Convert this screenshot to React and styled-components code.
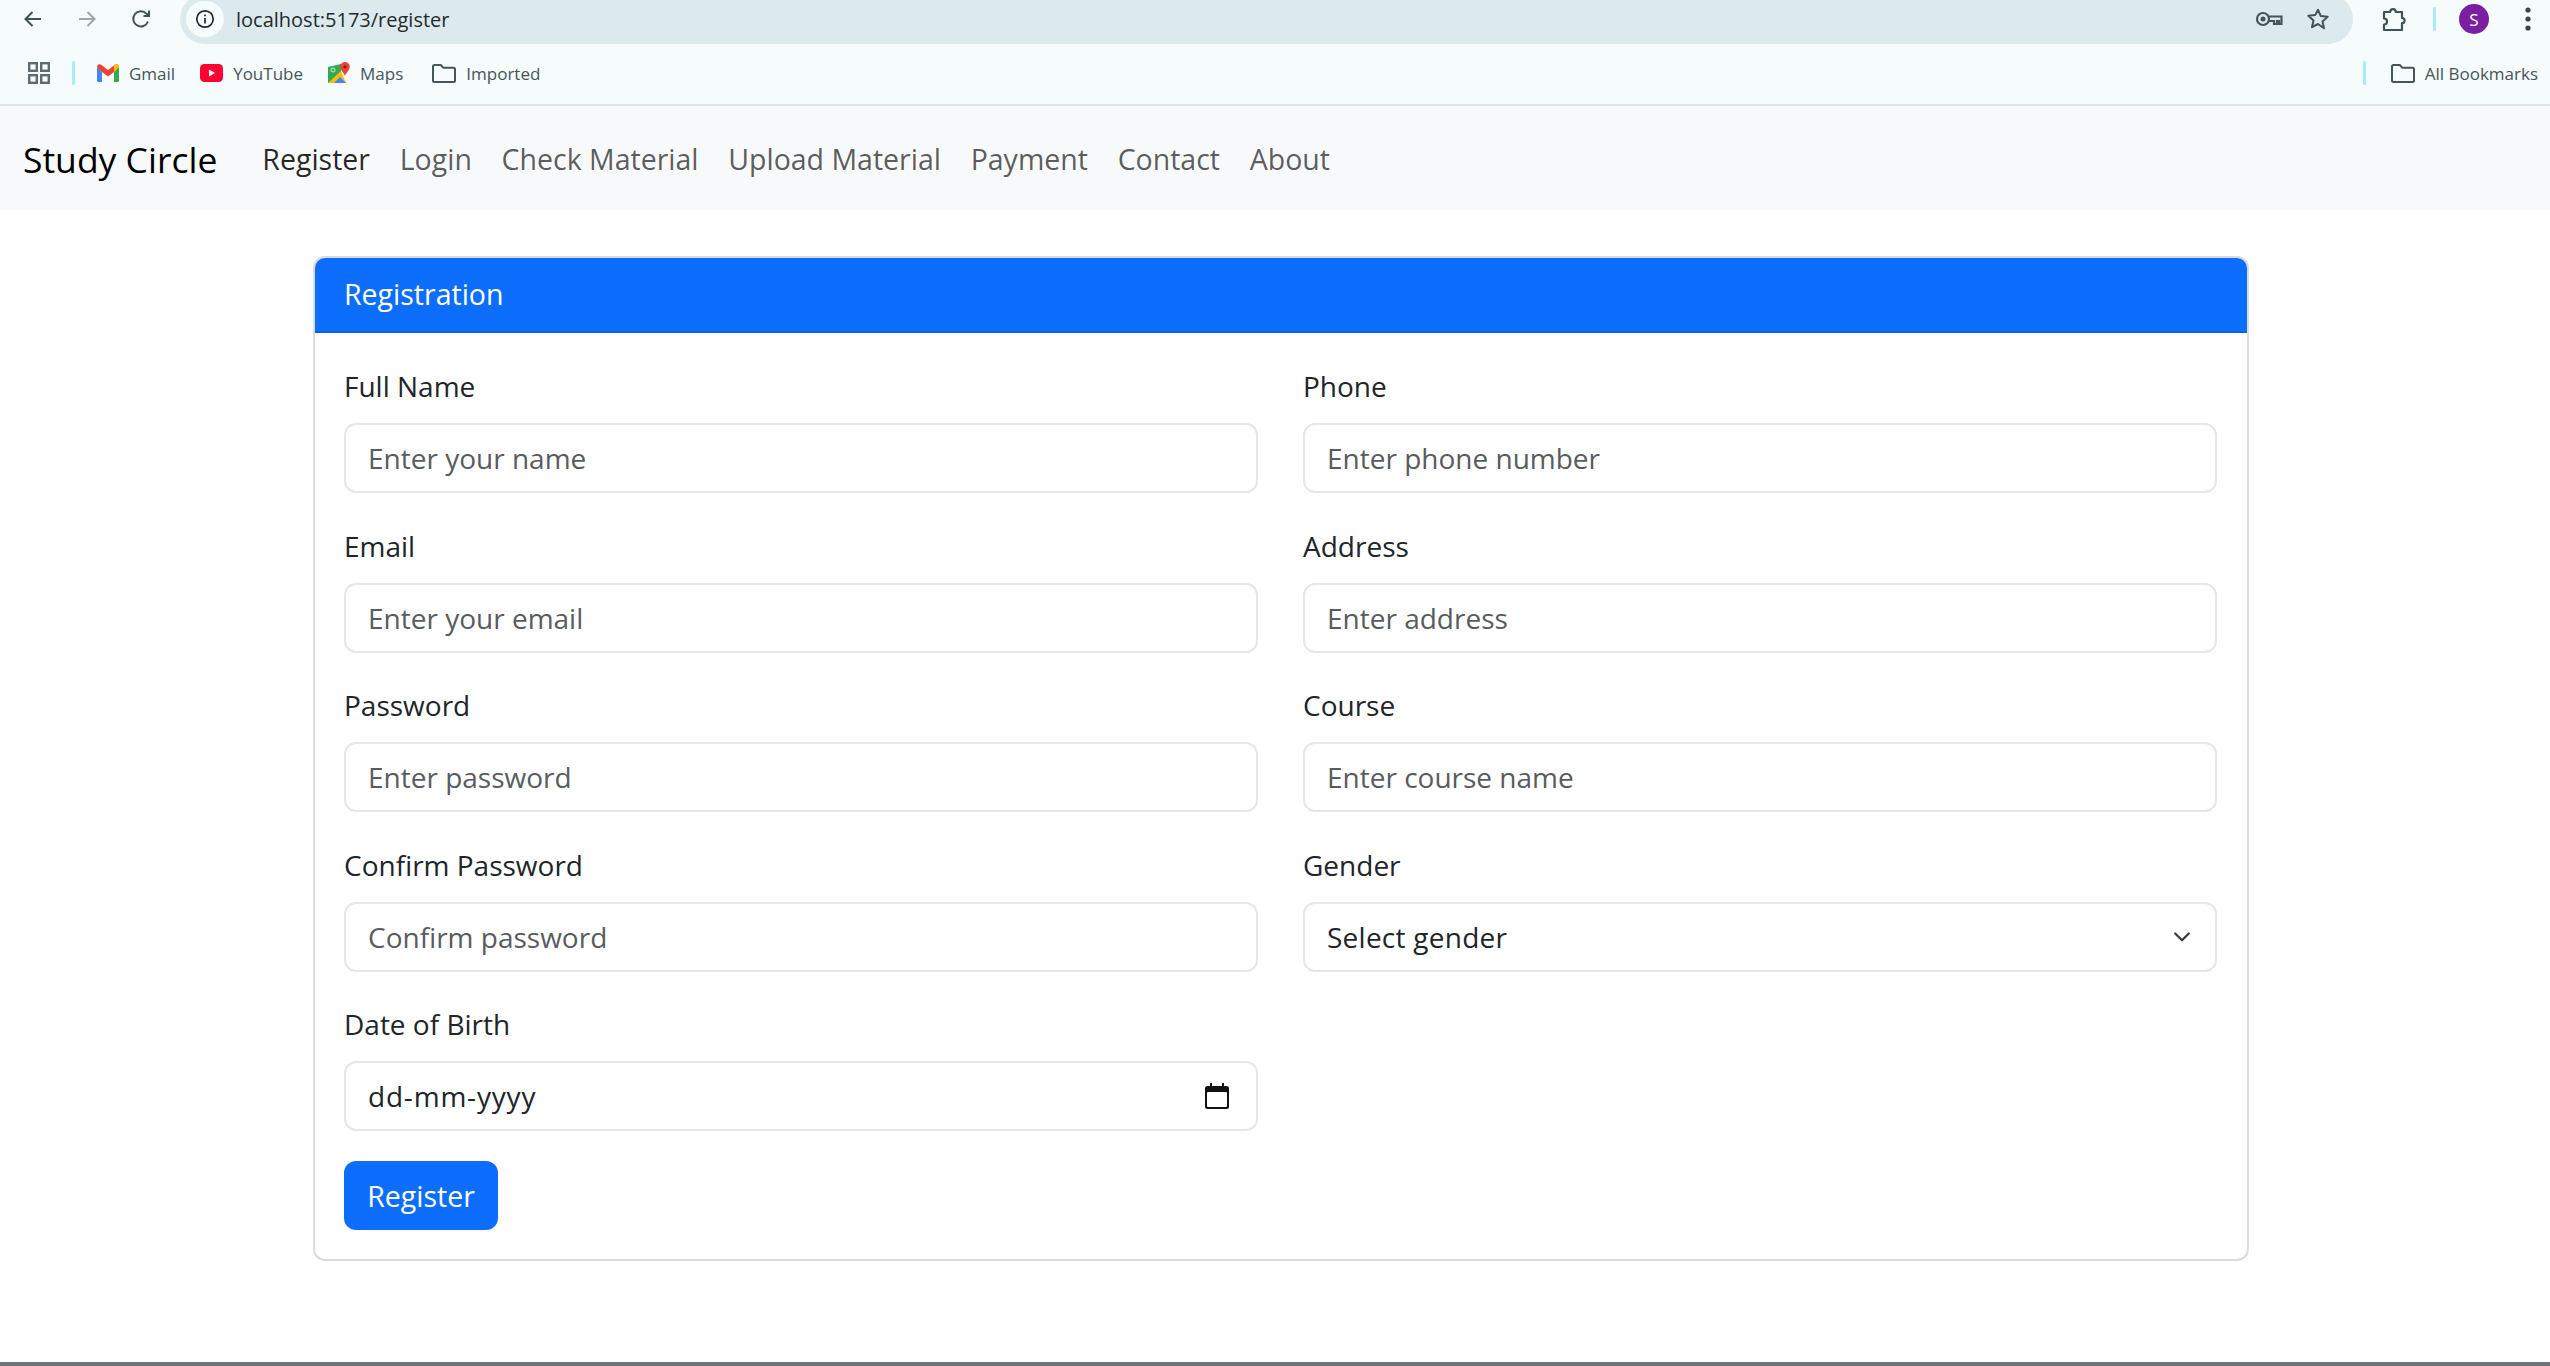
import styled, { createGlobalStyle } from "styled-components";

const GlobalStyle = createGlobalStyle`
html, body {
    margin: 0;
    padding: 0;
    height: 100%;
    overflow: hidden;
    background: #fff;
}
* {
    box-sizing: border-box;
}
body {
    font-family: "Open Sans", "Noto Sans", sans-serif;
    color: #212529;
}
`

const leftFields = [
    { label: "Full Name", placeholder: "Enter your name" },
    { label: "Email", placeholder: "Enter your email" },
    { label: "Password", placeholder: "Enter password" },
    { label: "Confirm Password", placeholder: "Confirm password" },
];

const rightFields = [
    { label: "Phone", placeholder: "Enter phone number" },
    { label: "Address", placeholder: "Enter address" },
    { label: "Course", placeholder: "Enter course name" },
];

const navLinks = ["Register", "Login", "Check Material", "Upload Material", "Payment", "Contact", "About"];

function BackIcon({ color }) {
    return (
        <svg width="24" height="24" viewBox="0 0 24 24" fill="none" stroke={color} strokeWidth="2">
            <path d="M20 12H5M11.5 5L4.5 12l7 7" />
        </svg>
    )
}

function ForwardIcon({ color }) {
    return (
        <svg width="24" height="24" viewBox="0 0 24 24" fill="none" stroke={color} strokeWidth="2">
            <path d="M4 12h15M12.5 5l7 7-7 7" />
        </svg>
    )
}

function ReloadIcon() {
    return (
        <svg width="24" height="24" viewBox="0 0 24 24" fill="none" stroke="#3f5257" strokeWidth="2">
            <path d="M19 14.5A7.6 7.6 0 1 1 17.4 6.6L20 9" />
            <path d="M20 3.5V9h-5.5" />
        </svg>
    )
}

function InfoIcon() {
    return (
        <svg width="20" height="20" viewBox="0 0 20 20" fill="none" stroke="#1f2a2e" strokeWidth="1.7">
            <circle cx="10" cy="10" r="8.2" />
            <path d="M10 9v5.5M10 5.4v1.8" />
        </svg>
    )
}

function KeyIcon() {
    return (
        <svg width="28" height="16" viewBox="0 0 28 16" fill="none" stroke="#465558" strokeWidth="2.2">
            <circle cx="8" cy="8" r="6" />
            <circle cx="8" cy="8" r="1.4" fill="#465558" />
            <path d="M14 5.5h12.5v7.5h-2.5v-3h-2v3h-3v-3h-5" />
        </svg>
    )
}

function StarIcon() {
    return (
        <svg width="24" height="24" viewBox="0 0 24 24" fill="none" stroke="#3f5257" strokeWidth="2" strokeLinejoin="round">
            <path d="M12 2.8l2.8 6.3 6.9.7-5.2 4.6 1.5 6.8L12 17l-6 3.2 1.5-6.8-5.2-4.6 6.9-.7z" />
        </svg>
    )
}

function PuzzleIcon() {
    return (
        <svg width="26" height="26" viewBox="0 0 26 26" fill="none" stroke="#3f5257" strokeWidth="2.2" strokeLinejoin="round">
            <path d="M3 6h6.2a2.8 2.8 0 0 1 5.6 0H21v6a2.6 2.6 0 0 1 0 5.2V24H3v-5.5a3 3 0 0 0 0-6z" />
        </svg>
    )
}

function MenuDots() {
    return (
        <svg width="6" height="24" viewBox="0 0 6 24" fill="#37474c">
            <circle cx="3" cy="3" r="2.6" />
            <circle cx="3" cy="12" r="2.6" />
            <circle cx="3" cy="21" r="2.6" />
        </svg>
    )
}

function AppsIcon() {
    return (
        <svg width="22" height="22" viewBox="0 0 22 22" fill="none" stroke="#5f6b6e" strokeWidth="2.4">
            <rect x="1.2" y="1.2" width="7.6" height="7.6" />
            <rect x="13.2" y="1.2" width="7.6" height="7.6" />
            <rect x="1.2" y="13.2" width="7.6" height="7.6" />
            <rect x="13.2" y="13.2" width="7.6" height="7.6" />
        </svg>
    )
}

function GmailIcon() {
    return (
        <svg width="22" height="18" viewBox="0 0 22 18">
            <path d="M0 3v13.5A1.5 1.5 0 0 0 1.5 18H5V8z" fill="#4285f4" />
            <path d="M22 3v13.5a1.5 1.5 0 0 1-1.5 1.5H17V8z" fill="#34a853" />
            <path d="M0 3.2C0 .8 2.6-.6 4.5.9L11 6l6.500-5.100C19.400-.6 22 .8 22 3.200L17 8l-6 4.500L5 8z" fill="#ea4335" />
            <path d="M17 8V.6l.5.3C19.400-.6 22 .8 22 3.200z" fill="#fbbc04" />
        </svg>
    )
}

function YoutubeIcon() {
    return (
        <svg width="23" height="18" viewBox="0 0 23 18">
            <rect width="23" height="18" rx="4.500" fill="#ff0033" />
            <path d="M9 5.500v7l6-3.500z" fill="#fff" />
        </svg>
    )
}

function MapsIcon() {
    return (
        <svg width="22" height="23" viewBox="0 0 22 23">
            <path d="M0 5l13-3v19H0z" fill="#34a853" />
            <path d="M0 21L13 9l5 12z" fill="#fbbc04" />
            <path d="M6 21l6-6 6 6z" fill="#4285f4" />
            <path d="M17 0a4.800 4.800 0 0 1 4.800 4.800C21.800 8 18 11 17 14c-1-3-4.800-6-4.800-9.200A4.800 4.800 0 0 1 17 0z" fill="#ea4335" />
            <circle cx="17" cy="4.800" r="1.600" fill="#8c1c13" />
            <circle cx="5" cy="8" r="2" fill="none" stroke="#d7efdc" strokeWidth="1" />
        </svg>
    )
}

function FolderIcon() {
    return (
        <svg width="24" height="19" viewBox="0 0 24 19" fill="none" stroke="#465558" strokeWidth="2" strokeLinejoin="round">
            <path d="M1 2.500A1.500 1.500 0 0 1 2.500 1h6.300l2.400 2.700h10.300A1.500 1.500 0 0 1 23 5.200v11.300a1.500 1.500 0 0 1-1.500 1.500h-19A1.500 1.500 0 0 1 1 16.500z" />
        </svg>
    )
}

function CalendarIcon() {
    return (
        <svg width="24" height="26" viewBox="0 0 24 26" fill="none">
            <path d="M5 0h2v3h10V0h2v3h2.500A2.500 2.500 0 0 1 24 5.500v18a2.500 2.500 0 0 1-2.500 2.500h-19A2.500 2.500 0 0 1 0 23.500v-18A2.500 2.500 0 0 1 2.500 3H5z" fill="#111" />
            <rect x="2" y="9" width="20" height="15" rx="1" fill="#fff" />
        </svg>
    )
}

function Chevron() {
    return (
        <svg width="16" height="10" viewBox="0 0 16 10" fill="none" stroke="#343a40" strokeWidth="2.200" strokeLinecap="round" strokeLinejoin="round">
            <path d="M1.200 1.500L8 8.300l6.800-6.800" />
        </svg>
    )
}

function Field({ label, placeholder }) {
    return (
        <FieldBox>
            <FieldLabel>{label}</FieldLabel>
            <TextInput type="text" placeholder={placeholder} />
        </FieldBox>
    )
}

function App() {
    return (
        <>
            <GlobalStyle />
            <BrowserChrome>
                <TopRow>
                    <NavButton><BackIcon color="#3f5257" /></NavButton>
                    <NavButton><ForwardIcon color="#9aa6a9" /></NavButton>
                    <NavButton><ReloadIcon /></NavButton>
                    <AddressBar>
                        <SiteInfo><InfoIcon /></SiteInfo>
                        <UrlText>localhost:5173/register</UrlText>
                        <AddressActions>
                            <KeyIcon />
                            <StarIcon />
                        </AddressActions>
                    </AddressBar>
                    <ToolbarEnd>
                        <PuzzleIcon />
                        <ChromeSeparator />
                        <Avatar>S</Avatar>
                        <MenuDots />
                    </ToolbarEnd>
                </TopRow>
                <BookmarksRow>
                    <AppsIcon />
                    <ChromeSeparator />
                    <Bookmark><GmailIcon />Gmail</Bookmark>
                    <Bookmark><YoutubeIcon />YouTube</Bookmark>
                    <Bookmark $after={29}><MapsIcon />Maps</Bookmark>
                    <Bookmark><FolderIcon />Imported</Bookmark>
                    <AllBookmarks>
                        <ChromeSeparator />
                        <Bookmark $after={0}><FolderIcon />All Bookmarks</Bookmark>
                    </AllBookmarks>
                </BookmarksRow>
            </BrowserChrome>

            <Navbar>
                <Brand>Study Circle</Brand>
                <NavList>
                    {navLinks.map((link, i) => (
                        <NavLink key={link} $active={i === 0}>{link}</NavLink>
                    ))}
                </NavList>
            </Navbar>

            <Card>
                <CardHeader>Registration</CardHeader>
                <CardBody>
                    <FormGrid>
                        <Column>
                            {leftFields.map((f) => <Field key={f.label} {...f} />)}
                            <FieldBox>
                                <FieldLabel>Date of Birth</FieldLabel>
                                <InputWrap>
                                    <TextInput type="text" defaultValue="dd-mm-yyyy" $spacing={0.8} />
                                    <InputIcon $right={29}><CalendarIcon /></InputIcon>
                                </InputWrap>
                            </FieldBox>
                        </Column>
                        <Column>
                            {rightFields.map((f) => <Field key={f.label} {...f} />)}
                            <FieldBox>
                                <FieldLabel>Gender</FieldLabel>
                                <InputWrap>
                                    <SelectInput defaultValue="">
                                        <option value="">Select gender</option>
                                        <option value="male">Male</option>
                                        <option value="female">Female</option>
                                    </SelectInput>
                                    <InputIcon $right={27}><Chevron /></InputIcon>
                                </InputWrap>
                            </FieldBox>
                        </Column>
                    </FormGrid>
                    <SubmitButton type="button">Register</SubmitButton>
                </CardBody>
            </Card>
            <FooterEdge />
        </>
    )
}

const BrowserChrome = styled.div`
height: 106px;
background: #f6fbfc;
border-bottom: 2px solid #dee5e9;
`
const TopRow = styled.div`
height: 44px;
display: flex;
align-items: flex-start;
padding-left: 6px;
overflow: hidden;
`
const NavButton = styled.div`
width: 54px;
height: 38px;
display: flex;
align-items: center;
justify-content: center;
`
const AddressBar = styled.div`
width: 2173px;
height: 50px;
margin-top: -6px;
margin-left: 12px;
padding: 0 23px 0 6px;
border-radius: 25px;
background: #dceaed;
display: flex;
align-items: center;
flex-shrink: 0;
`
const SiteInfo = styled.div`
width: 38px;
height: 36px;
border-radius: 18px;
background: #f6fbfc;
display: flex;
align-items: center;
justify-content: center;
`
const UrlText = styled.span`
margin-left: 12px;
font-size: 20px;
color: #1f2a2e;
`
const AddressActions = styled.div`
margin-left: auto;
display: flex;
align-items: center;
gap: 23px;
`
const ToolbarEnd = styled.div`
height: 38px;
margin-left: 28px;
display: flex;
align-items: center;
gap: 26px;
svg:last-child {
    margin-left: 10px;
}
`
const Avatar = styled.div`
width: 30px;
height: 30px;
margin-left: -3px;
border-radius: 50%;
background: #7b1fa2;
color: #fff;
font-size: 17px;
display: flex;
align-items: center;
justify-content: center;
`
const ChromeSeparator = styled.div`
width: 3px;
height: 24px;
border-radius: 2px;
background: #a8ecfb;
flex-shrink: 0;
`
const BookmarksRow = styled.div`
height: 60px;
display: flex;
align-items: center;
padding: 0 12px 2px 28px;
> div:nth-child(2) {
    margin-left: 22px;
    margin-right: 22px;
}
`
const Bookmark = styled.div`
display: flex;
align-items: center;
gap: 10px;
margin-right: ${({ $after = 25 }) => $after}px;
font-size: 17px;
color: #465558;
white-space: nowrap;
`
const AllBookmarks = styled.div`
margin-left: auto;
display: flex;
align-items: center;
gap: 25px;
`
const Navbar = styled.nav`
height: 104px;
padding: 2px 0 0 23px;
background: #f8f9fa;
display: flex;
align-items: center;
`
const Brand = styled.div`
font-size: 35.5px;
color: #000;
margin-right: 45px;
`
const NavList = styled.div`
display: flex;
align-items: center;
gap: 29.7px;
`
const NavLink = styled.a`
font-size: 28.5px;
color: ${({ $active }) => ($active ? "rgba(0, 0, 0, 0.85)" : "rgba(0, 0, 0, 0.65)")};
`
const Card = styled.section`
width: 1936px;
margin: 46px 0 0 313px;
border: 2px solid #dadbdc;
border-radius: 12px;
overflow: hidden;
`
const CardHeader = styled.div`
height: 77px;
margin: -2px -2px 0;
padding-left: 31px;
display: flex;
align-items: center;
background: #0d6efd;
border-bottom: 2px solid #0b62e0;
color: #fff;
font-size: 28.5px;
`
const CardBody = styled.div`
padding: 31px 29px 29px;
`
const FormGrid = styled.div`
display: grid;
grid-template-columns: 914px 914px;
column-gap: 45px;
`
const Column = styled.div`
display: flex;
flex-direction: column;
gap: 30.5px;
`
const FieldBox = styled.div`
display: flex;
flex-direction: column;
`
const FieldLabel = styled.label`
height: 44px;
line-height: 44px;
margin-bottom: 15px;
font-size: 28px;
color: #212529;
`
const InputWrap = styled.div`
position: relative;
`
const TextInput = styled.input`
display: block;
width: 100%;
height: 70px;
padding: 0 22px;
border: 2px solid #e6e7ea;
border-radius: 12px;
background: #fff;
color: #212529;
font-family: inherit;
font-size: 28px;
letter-spacing: ${({ $spacing = 0 }) => $spacing}px;
outline: none;
&::placeholder {
    color: #595c5f;
    opacity: 1;
}
`
const SelectInput = styled.select`
display: block;
width: 100%;
height: 70px;
padding: 0 22px;
border: 2px solid #e6e7ea;
border-radius: 12px;
background: #fff;
color: #212529;
font-family: inherit;
font-size: 28px;
letter-spacing: 0.25px;
outline: none;
appearance: none;
`
const InputIcon = styled.span`
position: absolute;
top: 50%;
right: ${({ $right }) => $right}px;
transform: translateY(-50%);
display: flex;
pointer-events: none;
`
const SubmitButton = styled.button`
display: block;
width: 154px;
height: 69px;
margin-top: 30px;
padding: 0;
border: none;
border-radius: 12px;
background: #0d6efd;
color: #fff;
font-family: inherit;
font-size: 28.5px;
`
const FooterEdge = styled.div`
height: 4px;
margin-top: 101px;
background: #6c757d;
`

export default App;
